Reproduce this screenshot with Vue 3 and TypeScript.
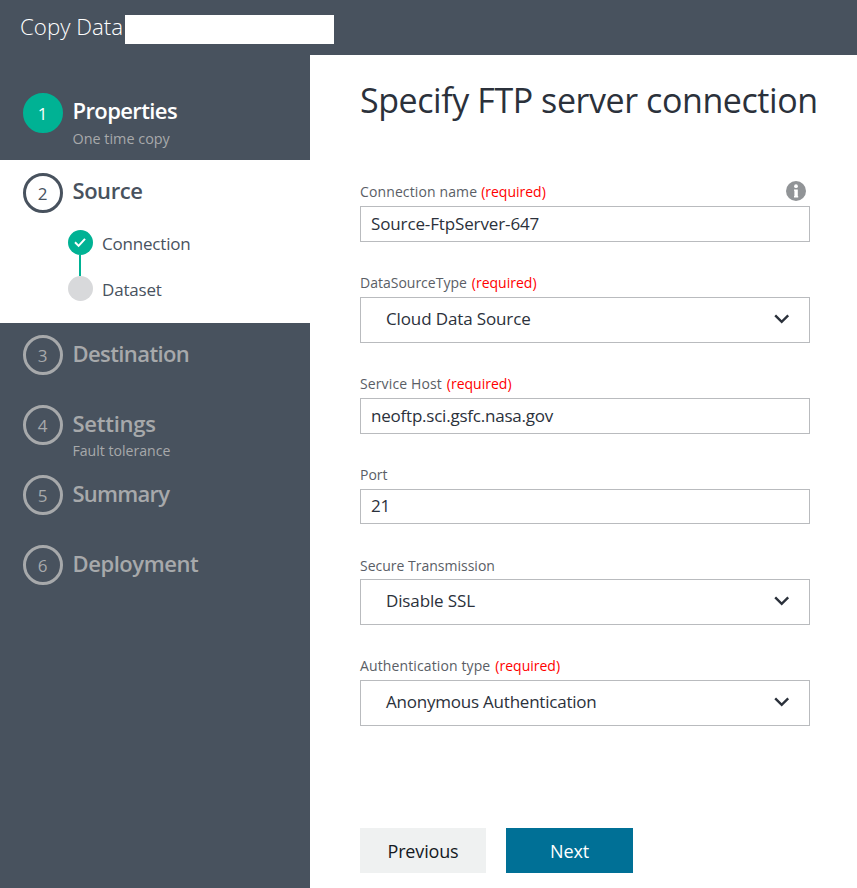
<script setup lang="ts">
interface SubStep { label: string; done: boolean }
interface Step {
  id: string
  title: string
  note?: string
  state: 'done' | 'current' | 'pending'
  children?: SubStep[]
}
interface Field {
  id: string
  label: string
  required?: boolean
  info?: boolean
  kind: 'text' | 'select'
  value: string
}

const steps: Step[] = [
  { id: 'properties', title: 'Properties', note: 'One time copy', state: 'done' },
  {
    id: 'source',
    title: 'Source',
    state: 'current',
    children: [
      { label: 'Connection', done: true },
      { label: 'Dataset', done: false },
    ],
  },
  { id: 'destination', title: 'Destination', state: 'pending' },
  { id: 'settings', title: 'Settings', note: 'Fault tolerance', state: 'pending' },
  { id: 'summary', title: 'Summary', state: 'pending' },
  { id: 'deployment', title: 'Deployment', state: 'pending' },
]

const fields: Field[] = [
  { id: 'name', label: 'Connection name', required: true, info: true, kind: 'text', value: 'Source-FtpServer-647' },
  { id: 'type', label: 'DataSourceType', required: true, kind: 'select', value: 'Cloud Data Source' },
  { id: 'host', label: 'Service Host', required: true, kind: 'text', value: 'neoftp.sci.gsfc.nasa.gov' },
  { id: 'port', label: 'Port', kind: 'text', value: '21' },
  { id: 'ssl', label: 'Secure Transmission', kind: 'select', value: 'Disable SSL' },
  { id: 'auth', label: 'Authentication type', required: true, kind: 'select', value: 'Anonymous Authentication' },
]
</script>

<template>
  <div class="wizard">
    <header class="topbar">
      <span class="topbar-title">Copy Data</span>
      <span class="topbar-name"></span>
    </header>

    <div class="body">
      <nav class="sidebar">
        <section v-for="(step, i) in steps" :key="step.id" class="step" :class="[step.state, step.id]">
          <div class="step-head">
            <span class="badge">{{ i + 1 }}</span>
            <div class="step-text">
              <div class="step-title">{{ step.title }}</div>
              <div v-if="step.note" class="step-note">{{ step.note }}</div>
            </div>
          </div>
          <ul v-if="step.children" class="substeps">
            <li v-for="sub in step.children" :key="sub.label" class="substep" :class="{ complete: sub.done }">
              <span class="marker">
                <span class="dot">
                  <svg v-if="sub.done" viewBox="0 0 25 25" width="25" height="25">
                    <path d="M7 12.3 L10.6 15.9 L17 8.8" fill="none" stroke="#fff" stroke-width="2" />
                  </svg>
                </span>
                <span v-if="sub.done" class="link"></span>
              </span>
              <span class="substep-label">{{ sub.label }}</span>
            </li>
          </ul>
        </section>
      </nav>

      <main class="content">
        <h1>Specify FTP server connection</h1>
        <form class="form" @submit.prevent>
          <div v-for="field in fields" :key="field.id" class="field" :class="field.id">
            <div class="label-row">
              <span class="label">{{ field.label }}</span>
              <span v-if="field.required" class="required">(required)</span>
              <svg v-if="field.info" class="info" viewBox="0 0 20 20" width="20" height="20">
                <circle cx="10" cy="10" r="10" fill="#919497" />
                <circle cx="10" cy="5.2" r="1.9" fill="#fff" />
                <path d="M8 8.4 H11.8 V15 H12.2 V16.4 H8 V15 H8.4 V9.8 H8 Z" fill="#fff" />
              </svg>
            </div>
            <div class="control" :class="field.kind">
              <span class="value">{{ field.value }}</span>
              <svg v-if="field.kind === 'select'" class="chevron" viewBox="0 0 16 12" width="16" height="12">
                <path d="M1.2 2.4 L7.7 8.9 L14.2 2.4" fill="none" stroke="#2b313b" stroke-width="2.4" />
              </svg>
            </div>
          </div>
        </form>
        <div class="actions">
          <button type="button" class="btn previous">Previous</button>
          <button type="button" class="btn next">Next</button>
        </div>
      </main>
    </div>
  </div>
</template>

<style>
body {
  margin: 0;
  background: #fff;
}
</style>

<style scoped>
.wizard {
  display: flex;
  flex-direction: column;
  height: 888px;
  overflow: hidden;
  font-family: "Open Sans", "Noto Sans", sans-serif;
  color: #2b313b;
}
.topbar {
  display: flex;
  flex: none;
  align-items: flex-start;
  box-sizing: border-box;
  height: 55px;
  padding-left: 20px;
  background: #48525e;
}
.topbar-title {
  width: 105px;
  margin-top: 12px;
  font-size: 22.3px;
  font-weight: 300;
  line-height: 30px;
  white-space: nowrap;
  color: #fff;
}
.topbar-name {
  width: 209px;
  height: 29px;
  margin-top: 15px;
  background: #fff;
}
.body {
  display: flex;
  flex: 1;
}
.sidebar {
  flex: none;
  box-sizing: border-box;
  width: 310px;
  padding-top: 26px;
  background: #48525e;
}
.step {
  box-sizing: border-box;
  height: 70px;
  padding: 12px 0 0 23px;
  color: #a7a9ab;
}
.step.done {
  height: 79px;
}
.step.current {
  height: 163px;
  padding-top: 13px;
  background: #fff;
  color: #48525e;
}
.step-head {
  display: flex;
  gap: 9.5px;
  height: 40px;
}
.badge {
  flex: none;
  box-sizing: border-box;
  width: 40px;
  height: 40px;
  border: 3px solid currentColor;
  border-radius: 50%;
  font-size: 17px;
  line-height: 35px;
  text-align: center;
  text-indent: -1px;
}
.done .badge {
  border-color: #00b294;
  background: #00b294;
  color: #fff;
}
.step-text {
  padding-top: 3px;
}
.done .step-text,
.current .step-text {
  padding-top: 2px;
}
.step-title {
  font-size: 22px;
  font-weight: 600;
  line-height: 30px;
  letter-spacing: -0.6px;
}
.source .step-title,
.deployment .step-title {
  letter-spacing: -0.45px;
}
.settings .step-title {
  letter-spacing: -0.25px;
}
.summary .step-title {
  letter-spacing: -0.75px;
}
.done .step-title {
  color: #fff;
}
.step-note {
  margin-top: 3px;
  font-size: 14.4px;
  line-height: 20px;
}
.done .step-note {
  margin-top: 4px;
}
.settings .step-note {
  font-size: 14.1px;
}
.substeps {
  margin: 17px 0 0 45px;
  padding: 0;
  list-style: none;
}
.substep {
  display: flex;
  gap: 9px;
  height: 46px;
}
.marker {
  display: flex;
  flex-direction: column;
  width: 25px;
}
.dot {
  flex: none;
  width: 25px;
  height: 25px;
  border-radius: 50%;
  background: #d8d9db;
}
.complete .dot {
  background: #00b294;
}
.dot svg {
  display: block;
}
.link {
  flex: 1;
  width: 2px;
  margin-left: 11px;
  background: #00b294;
}
.substep-label {
  margin-top: 2px;
  font-size: 17px;
  line-height: 24px;
  letter-spacing: -0.2px;
}
.content {
  box-sizing: border-box;
  flex: 1;
  padding: 25px 0 0 50px;
}
h1 {
  margin: 0 0 62px;
  font-size: 34px;
  font-weight: 400;
  line-height: 40px;
  letter-spacing: -0.43px;
  white-space: nowrap;
}
.form {
  display: flex;
  flex-direction: column;
  gap: 31px;
  width: 450px;
}
.label-row {
  display: flex;
  gap: 4px;
  height: 20px;
  margin-bottom: 4px;
  font-size: 14px;
  line-height: 20px;
}
.type .label-row,
.host .label-row,
.auth .label-row {
  gap: 5px;
}
.ssl .label-row {
  line-height: 22px;
}
.label {
  color: #5a5e66;
}
.name .label,
.host .label,
.auth .label {
  letter-spacing: 0.12px;
}
.required {
  color: #f00;
}
.info {
  margin: -1px 4px 0 auto;
}
.control {
  display: flex;
  align-items: center;
  justify-content: space-between;
  box-sizing: border-box;
  height: 36px;
  padding: 0 10px 1px;
  border: 1px solid #b9bbbe;
  font-size: 17px;
  line-height: 24px;
  letter-spacing: -0.13px;
}
.control.select {
  height: 46px;
  padding: 0 19px 3px 25px;
}
.port .control {
  height: 35px;
}
.host .control,
.auth .control {
  letter-spacing: -0.22px;
}
.actions {
  display: flex;
  gap: 20px;
  margin-top: 102px;
}
.btn {
  width: 126px;
  height: 45px;
  padding: 0;
  border: 0;
  background: #eff1f1;
  color: #15191f;
  font-family: inherit;
  font-size: 18px;
  letter-spacing: -0.15px;
}
.btn.next {
  width: 127px;
  background: #007096;
  color: #fff;
}
</style>
